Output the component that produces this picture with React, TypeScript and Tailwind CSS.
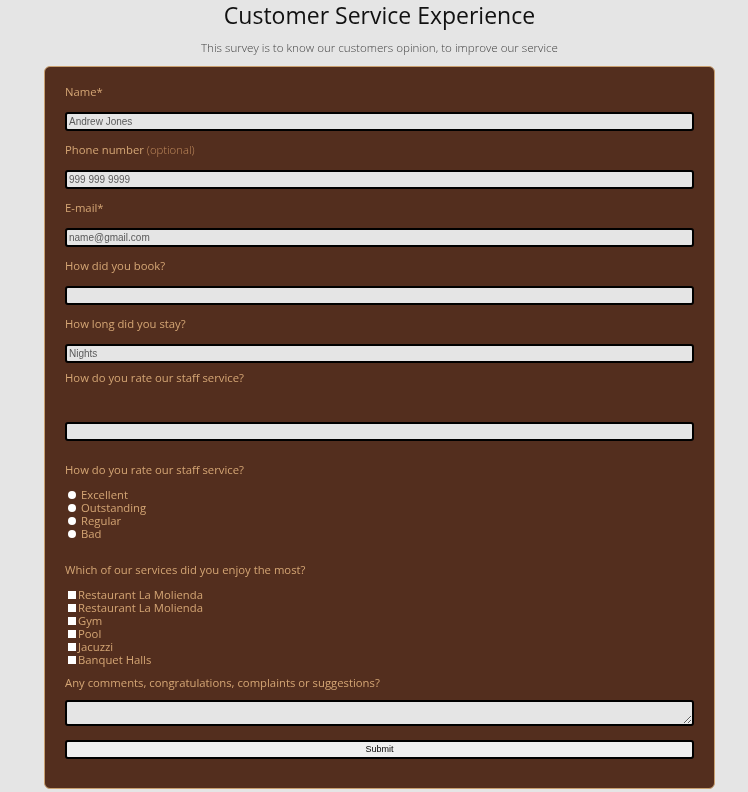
import React from 'react';

const labelCls = "block text-[11.3px] leading-[16px] font-medium text-[#d4a574]";
const inputCls =
  "block w-full h-[19px] rounded-[3px] border-2 border-black bg-[#e5e5e5] px-[2px] text-[10px] text-[#555] placeholder:text-[#5a5a5a] outline-none";

const Field = ({ label, optional, placeholder }: { label: string; optional?: boolean; placeholder?: string }) => (
  <div className="mb-[11px]">
    <label className={labelCls + " mb-[12px]"}>
      {label}
      {optional && <span className="font-light text-[#c08a5c]"> (optional)</span>}
    </label>
    <input className={inputCls} style={{ fontFamily: '"Liberation Sans", Arial, sans-serif' }} placeholder={placeholder} />
  </div>
);

const radios = ["Excellent", "Outstanding", "Regular", "Bad"];
const services = ["Restaurant La Molienda", "Restaurant La Molienda", "Gym", "Pool", "Jacuzzi", "Banquet Halls"];

const App = () => {
  return (
    <div className="min-h-[792px] bg-[#e5e5e5] pb-[4px]" style={{ fontFamily: '"Open Sans", "Noto Sans", sans-serif' }}>
      <div className="ml-[44px] w-[671px]">
        <h1 className="pt-[1px] text-center text-[23px] leading-[28px] text-[#111]">Customer Service Experience</h1>
        <p className="mt-[11px] text-center text-[11.6px] leading-[16px] font-light text-[#444]">
          This survey is to know our customers opinion, to improve our service
        </p>

        <form className="mt-[10px] rounded-[6px] border border-[#c9a070] bg-[#532e1e] px-[20px] pt-[17px] pb-[29px]">
          <Field label="Name*" placeholder="Andrew Jones" />
          <Field label="Phone number" optional placeholder="999 999 9999" />
          <Field label="E-mail*" placeholder="name@gmail.com" />
          <Field label="How did you book?" />
          <Field label="How long did you stay?" placeholder="Nights" />

          <div className="-mt-[4px]">
            <label className={labelCls}>How do you rate our staff service?</label>
            <input className={inputCls + " mt-[36px]"} />
          </div>

          <div className="mt-[21px]">
            <p className={labelCls}>How do you rate our staff service?</p>
            <div className="mt-[10px] flex flex-col">
              {radios.map((r) => (
                <label key={r} className="flex h-[13px] items-center text-[11.3px] leading-[13px] font-medium text-[#d4a574]">
                  <input type="radio" name="staff" className="ml-[3px] mr-[5px] h-[8px] w-[8px] appearance-none rounded-full bg-white" />
                  {r}
                </label>
              ))}
            </div>
          </div>

          <div className="mt-[22px]">
            <p className={labelCls}>Which of our services did you enjoy the most?</p>
            <div className="mt-[10px] flex flex-col">
              {services.map((s, i) => (
                <label key={i} className="flex h-[13px] items-center text-[11.3px] leading-[13px] font-medium text-[#d4a574]">
                  <input type="checkbox" className="ml-[3px] mr-[2px] h-[8px] w-[8px] appearance-none bg-white" />
                  {s}
                </label>
              ))}
            </div>
          </div>

          <div className="mt-[9px]">
            <label className={labelCls}>Any comments, congratulations, complaints or suggestions?</label>
            <textarea className="mt-[9px] block h-[26px] w-full rounded-[3px] border-2 border-black bg-[#e5e5e5] outline-none" />
          </div>

          <button
            type="button"
            className="mt-[14px] block h-[19px] w-full rounded-[3px] border-2 border-black bg-[#efefef] text-[9px] text-black"
            style={{ fontFamily: '"Liberation Sans", Arial, sans-serif' }}
          >
            Submit
          </button>
        </form>
      </div>
    </div>
  );
};

export default App;
